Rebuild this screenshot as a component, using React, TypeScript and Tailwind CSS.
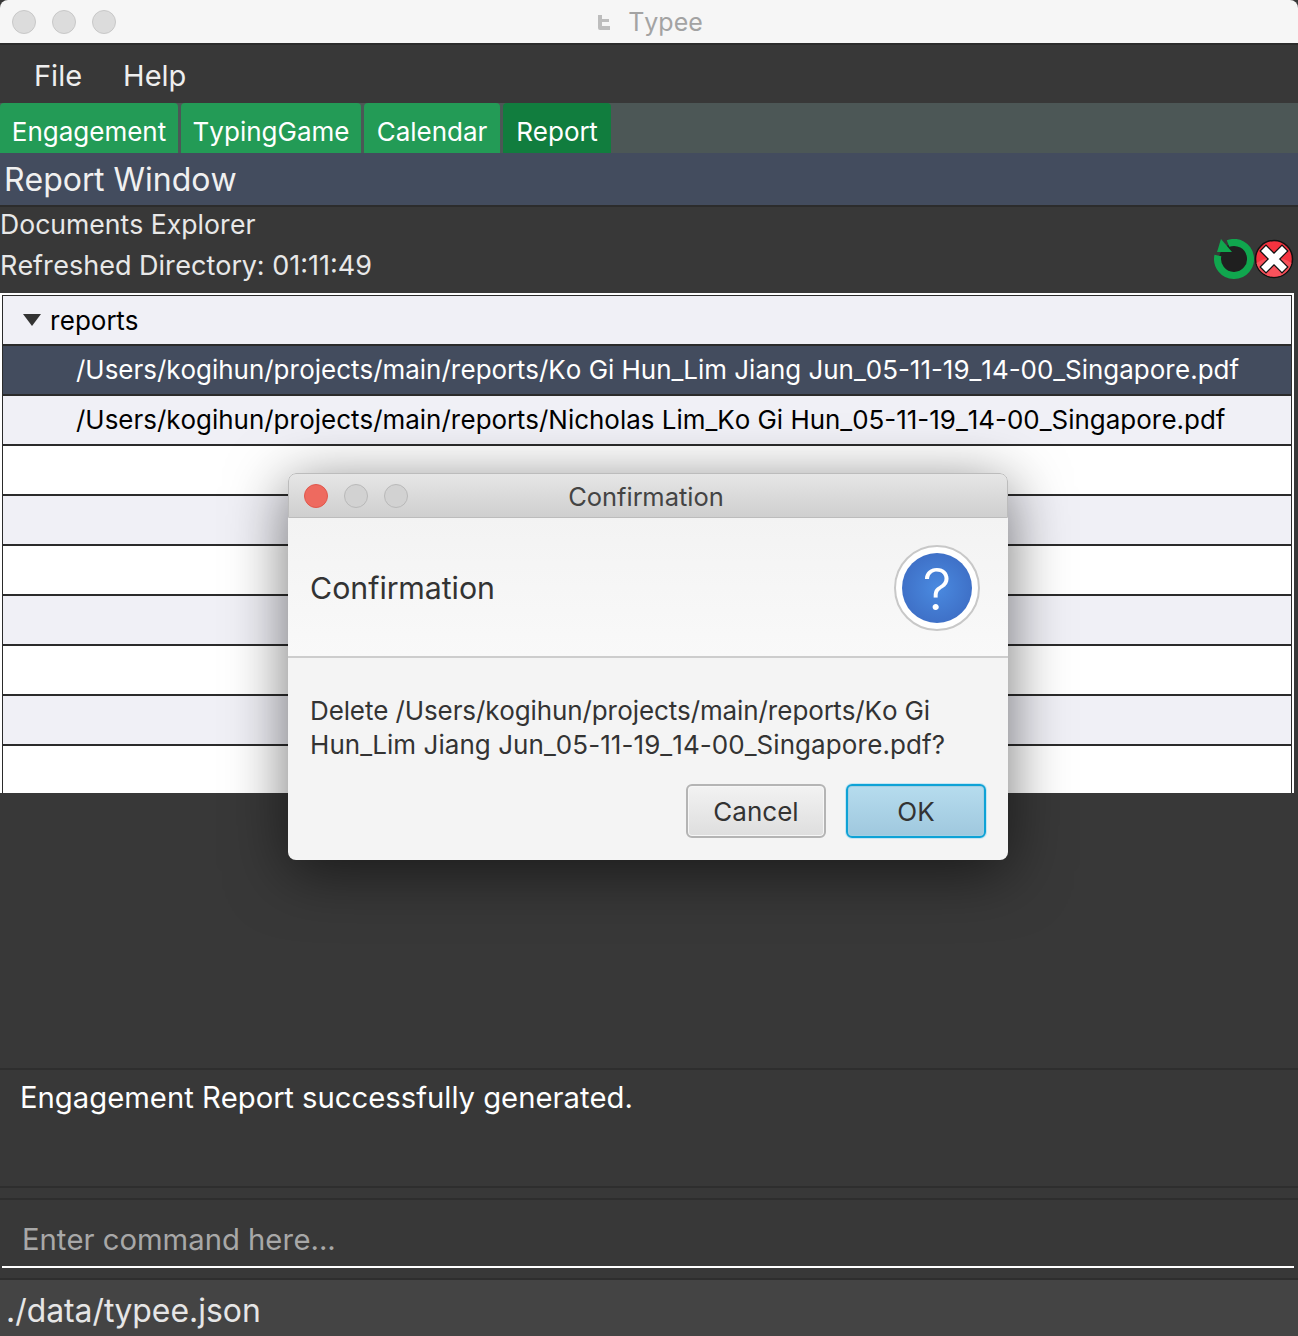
const rowPaths = [
  "/Users/kogihun/projects/main/reports/Ko Gi Hun_Lim Jiang Jun_05-11-19_14-00_Singapore.pdf",
  "/Users/kogihun/projects/main/reports/Nicholas Lim_Ko Gi Hun_05-11-19_14-00_Singapore.pdf",
];

const tabs = [
  { label: "Engagement", width: "w-[181px]" },
  { label: "TypingGame", width: "w-[183px]" },
  { label: "Calendar", width: "w-[139px]" },
];

const TrafficLight = ({ color = "bg-[#dcdcdc] border-[#c8c8c8]" }: { color?: string }) => (
  <span className={`block w-6 h-6 rounded-full border ${color}`} />
);

const AppLogo = () => (
  <svg width="14" height="16" viewBox="0 0 14 16" className="shrink-0">
    <path d="M1 0 H5 V4 H12 V7 H5 V11 H13 V15 H3 Q1 15 1 13 Z" fill="#bdbdbd" />
  </svg>
);

const RefreshIcon = () => (
  <svg width="40" height="40" viewBox="0 0 40 40">
    <circle cx="20" cy="20" r="15" fill="#1f1f1f" />
    <path d="M3.9 16.5 A16.5 16.5 0 1 0 14 4.6" fill="none" stroke="#10a64e" strokeWidth="7" />
    <polygon points="3,13 7,0 18,13" fill="#10a64e" />
  </svg>
);

const CloseIcon = () => (
  <svg width="40" height="40" viewBox="0 0 40 40">
    <circle cx="20" cy="20" r="18.5" fill="#f5333f" stroke="#111" strokeWidth="1.5" />
    <path d="M2.5 24 Q20 13 37.5 24 A18 18 0 0 1 2.5 24 Z" fill="#f8525c" />
    <path d="M12 12 L28 28 M28 12 L12 28" stroke="#111" strokeWidth="9.5" strokeLinecap="square" />
    <path d="M12 12 L28 28 M28 12 L12 28" stroke="#fff" strokeWidth="7" strokeLinecap="square" />
  </svg>
);

const QuestionIcon = () => (
  <div className="w-[86px] h-[86px] mt-[2px] rounded-full bg-white border-2 border-[#c8c8c8] flex items-center justify-center">
    <div className="w-[70px] h-[70px] rounded-full bg-[radial-gradient(circle,#4a8ae0,#3a66bd)] flex items-center justify-center text-white text-[58px] font-light leading-none pt-[1px]">
      ?
    </div>
  </div>
);

const ListRow = ({ index, selected, text }: { index: number; selected?: boolean; text?: string }) => (
  <div
    className={`h-[50px] border-b-2 border-[#2b2b2b] flex items-center pl-[73px] text-[25.95px] whitespace-nowrap ${
      selected ? "bg-[#434c5e] text-white" : index % 2 === 0 ? "bg-[#f0f0f6] text-black" : "bg-white text-black"
    }`}
  >
    {text}
  </div>
);

const ConfirmDialog = () => (
  <div className="absolute left-[288px] top-[473px] w-[720px] h-[387px] rounded-lg bg-[#f4f4f4] shadow-[0_12px_60px_rgba(0,0,0,0.55)] overflow-hidden flex flex-col text-[#333]">
    <div className="h-[45px] shrink-0 flex items-center relative px-[15px] gap-4 border border-b border-[#bcbcbc] rounded-t-lg bg-gradient-to-b from-[#e6e6e6] to-[#cfcfcf]">
      <TrafficLight color="bg-[#ee6a5f] border-[#e0574c]" />
      <TrafficLight color="bg-[#d2d2d2] border-[#b9b9b9]" />
      <TrafficLight color="bg-[#d2d2d2] border-[#b9b9b9]" />
      <span className="absolute inset-x-0 pr-1 pt-[3px] text-center text-[25.5px] text-[#444]">Confirmation</span>
    </div>
    <div className="h-[140px] shrink-0 flex items-center justify-between pl-[22px] pr-[28px] border-b-2 border-[#cdcdcd] bg-gradient-to-b from-[#f3f3f3] to-[#f9f9f9]">
      <span className="text-[30.3px] pt-1">Confirmation</span>
      <QuestionIcon />
    </div>
    <div className="pl-[22px] pt-[36px] text-[26px] leading-[34px]">
      <p className="tracking-[-0.12px]">Delete /Users/kogihun/projects/main/reports/Ko Gi</p>
      <p className="tracking-[0.06px]">Hun_Lim Jiang Jun_05-11-19_14-00_Singapore.pdf?</p>
    </div>
    <div className="flex justify-end gap-5 pr-[22px] pt-[22px]">
      <button className="w-[140px] h-[54px] rounded-md border-2 border-[#b4b4b4] bg-gradient-to-b from-[#f2f2f2] to-[#dedede] shadow-[inset_0_0_0_1px_#f6f6f6] text-[26px] text-[#333]">
        Cancel
      </button>
      <button className="w-[140px] h-[54px] rounded-md border-2 border-[#0ea2d6] bg-gradient-to-b from-[#b6dcee] to-[#9fc8de] shadow-[0_0_0_1px_#c5e6f3,inset_0_0_0_1px_#a3cfe2] text-[26px] text-[#333]">
        OK
      </button>
    </div>
  </div>
);

export default function App() {
  return (
    <div className="relative w-[1298px] h-[1336px] overflow-hidden bg-[#383838] font-['Inter',sans-serif] [font-kerning:none] flex flex-col">
      {/* title bar */}
      <div className="h-[45px] shrink-0 bg-[#f6f6f6] border-b-2 border-[#2c2c2c] flex items-center gap-4 pl-3 relative rounded-t-lg">
        <TrafficLight />
        <TrafficLight />
        <TrafficLight />
        <div className="absolute inset-x-0 flex justify-center items-center gap-[17px] pl-[2px] pt-[3px] text-[25px] text-[#a3a3a3]">
          <AppLogo />
          <span>Typee</span>
        </div>
      </div>

      {/* menu */}
      <div className="h-[58px] shrink-0 flex items-center gap-[41px] pl-[34px] pt-1 text-[29px] text-[#eeeeee]">
        <span>File</span>
        <span>Help</span>
      </div>

      {/* tabs */}
      <div className="h-[50px] shrink-0 bg-[#4c5756] flex text-[26px] text-white">
        {tabs.map((t) => (
          <div key={t.label} className={`${t.width} h-full pr-[3px] shrink-0`}>
            <div className="h-full rounded-t bg-[#239b56] flex items-center justify-center pt-[7px]">{t.label}</div>
          </div>
        ))}
        <div className="w-[108px] h-full rounded-t bg-[#117d3e] flex items-center justify-center pt-[7px]">Report</div>
      </div>

      <div className="h-[54px] shrink-0 bg-[#434c5e] border-b-2 border-[#2c2c2c] pl-[4px] pt-[2px] flex items-center text-[32px] text-[#f0f0f0]">
        Report Window
      </div>

      {/* explorer */}
      <div className="h-[86px] shrink-0 relative text-[27px] leading-[42px] text-[#e8e8e8]">
        <div className="-mt-1 text-[26.6px]">Documents Explorer</div>
        <div>Refreshed Directory: 01:11:49</div>
        <div className="absolute right-[4px] top-[32px] flex">
          <RefreshIcon />
          <CloseIcon />
        </div>
      </div>

      <div className="h-[500px] w-[1294px] shrink-0 overflow-hidden bg-white pt-[2px] pl-[2px] pr-[2px]">
        <div className="border-l border-r border-t border-[#2b2b2b] h-[520px]">
          <div className="h-[50px] border-b-2 border-[#2b2b2b] bg-[#f0f0f6] flex items-center text-[26px] text-black pl-[20px] gap-[9px]">
            <span className="w-0 h-0 border-l-[9px] border-r-[9px] border-t-[12px] border-l-transparent border-r-transparent border-t-[#333]" />
            reports
          </div>
          <ListRow index={1} selected text={rowPaths[0]} />
          <ListRow index={2} text={rowPaths[1]} />
          {[3, 4, 5, 6, 7, 8, 9].map((i) => (
            <ListRow key={i} index={i} />
          ))}
        </div>
      </div>

      <div className="h-[277px] shrink-0 border-b-2 border-[#2e2e2e]" />

      <div className="h-[118px] shrink-0 border-b-2 border-[#2e2e2e] pl-5 pt-[9px] text-[29.25px] text-white leading-[38px]">
        Engagement Report successfully generated.
      </div>
      <div className="h-[12px] shrink-0 border-b-2 border-[#2e2e2e]" />

      <div className="h-[80px] shrink-0 border-b-2 border-[#2e2e2e] pl-[2px] pr-[4px]">
        <div className="h-[68px] border-b-2 border-white pl-5 pt-[20px] text-[29.25px] leading-[40px] text-[#a8a8a8]">
          Enter command here...
        </div>
      </div>

      <div className="flex-1 bg-[#444444] pl-[6px] pt-[6px] flex items-center text-[31.9px] text-[#e6e6e6]">./data/typee.json</div>

      <ConfirmDialog />
    </div>
  );
}
